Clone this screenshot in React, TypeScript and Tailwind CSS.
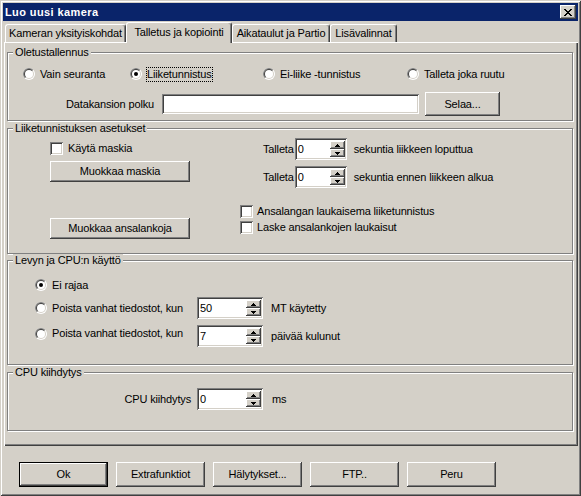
import React from "react";

const RAISED =
  "shadow-[inset_-1px_-1px_#404040,inset_1px_1px_#ffffff,inset_-2px_-2px_#808080,inset_2px_2px_#d4d0c8]";
const SUNKEN =
  "shadow-[inset_1px_1px_#808080,inset_-1px_-1px_#ffffff,inset_2px_2px_#404040,inset_-2px_-2px_#d4d0c8]";

function Radio({ checked }: { checked?: boolean }) {
  return (
    <svg width="12" height="12" viewBox="0 0 12 12" className="shrink-0">
      <circle cx="6" cy="6" r="6" fill="#ffffff" />
      <path d="M1.757 10.243 A6 6 0 0 1 10.243 1.757 Z" fill="#808080" />
      <circle cx="6" cy="6" r="5" fill="#d4d0c8" />
      <path d="M2.464 9.536 A5 5 0 0 1 9.536 2.464 Z" fill="#404040" />
      <circle cx="6" cy="6" r="4" fill="#ffffff" />
      {checked && <circle cx="6" cy="6" r="2" fill="#000000" />}
    </svg>
  );
}

function RadioItem({
  label,
  checked,
  focus,
  className = "",
}: {
  label: string;
  checked?: boolean;
  focus?: boolean;
  className?: string;
}) {
  return (
    <div className={"flex items-center " + className}>
      <Radio checked={checked} />
      {focus ? (
        <span className="ml-[4px] border border-dotted border-black leading-[13px] whitespace-nowrap">
          {label}
        </span>
      ) : (
        <span className="ml-[5px] leading-[13px] whitespace-nowrap">{label}</span>
      )}
    </div>
  );
}

function Check() {
  return <span className={"block shrink-0 w-[13px] h-[13px] bg-white " + SUNKEN} />;
}

function SpinBtn({ up }: { up?: boolean }) {
  return (
    <div className={"w-[15px] h-[8px] bg-[#d4d0c8] flex items-center justify-center " + RAISED}>
      <svg width="5" height="3" viewBox="0 0 5 3" shapeRendering="crispEdges">
        {up ? (
          <path d="M2 0h1v1h1v1h1v1H0V2h1V1h1z" fill="#000" />
        ) : (
          <path d="M0 0h5v1H4v1H3v1H2V2H1V1H0z" fill="#000" />
        )}
      </svg>
    </div>
  );
}

function Spin({ value, className = "" }: { value: string; className?: string }) {
  return (
    <div
      className={
        "h-[22px] bg-white flex items-center justify-between pl-[3px] pr-[2px] shrink-0 " +
        SUNKEN +
        " " +
        className
      }
    >
      <span className="leading-[13px]">{value}</span>
      <div className="flex flex-col">
        <SpinBtn up />
        <SpinBtn />
      </div>
    </div>
  );
}

function Btn({
  children,
  className = "",
  def,
}: {
  children: React.ReactNode;
  className?: string;
  def?: boolean;
}) {
  return (
    <button
      type="button"
      className={
        "flex items-center justify-center bg-[#d4d0c8] text-black leading-[13px] shrink-0 " +
        (def ? "border border-black " : "") +
        RAISED +
        " " +
        className
      }
    >
      {children}
    </button>
  );
}

function Group({
  title,
  className = "",
  children,
}: {
  title: string;
  className?: string;
  children: React.ReactNode;
}) {
  return (
    <div
      className={
        "border border-[#808080] shadow-[inset_1px_1px_#ffffff,1px_1px_#ffffff] flex flex-col shrink-0 " +
        className
      }
    >
      <span className="-mt-[7px] ml-[5px] self-start px-[2px] bg-[#d4d0c8] leading-[13px]">
        {title}
      </span>
      {children}
    </div>
  );
}

function Tab({
  label,
  selected,
  className = "",
}: {
  label: string;
  selected?: boolean;
  className?: string;
}) {
  return (
    <div
      className={
        "flex items-center justify-center bg-[#d4d0c8] border-t border-l border-white border-r border-r-[#404040] rounded-t-[3px] shadow-[inset_-1px_0_#808080] whitespace-nowrap " +
        (selected ? "h-[21px] -mb-[1px] relative z-10 pb-[1px] " : "h-[18px] ") +
        className
      }
    >
      {label}
    </div>
  );
}

export default function App() {
  return (
    <div className="w-[581px] h-[496px] bg-[#d4d0c8] p-[3px] flex flex-col font-['Liberation_Sans',Arial,sans-serif] text-[11px] leading-[13px] tracking-[-0.15px] text-black shadow-[inset_1px_1px_#d4d0c8,inset_-1px_-1px_#404040,inset_2px_2px_#ffffff,inset_-2px_-2px_#808080] overflow-hidden select-none">
      {/* Title bar */}
      <div className="h-[18px] shrink-0 bg-[#0a246a] flex items-center justify-between pl-[2px] pr-[2px]">
        <span className="text-white font-bold text-[11px] tracking-[0.4px] leading-[14px]">
          Luo uusi kamera
        </span>
        <div className={"w-[16px] h-[14px] bg-[#d4d0c8] flex items-center justify-center " + RAISED}>
          <svg width="8" height="7" viewBox="0 0 8 7" shapeRendering="crispEdges">
            <path
              d="M0 0h2v1h1v1h2V1h1V0h2v1H7v1H6v1H5v1h1v1h1v1h1v1H6V6H5V5H3v1H2v1H0V6h1V5h1V4h1V3H2V2H1V1H0z"
              fill="#000"
            />
          </svg>
        </div>
      </div>

      {/* Tabs */}
      <div className="h-[21px] shrink-0 flex items-end pl-[2px]">
        <Tab label="Kameran yksityiskohdat" className="w-[121px]" />
        <Tab label="Talletus ja kopiointi" selected className="w-[106px]" />
        <Tab label="Aikataulut ja Partio" className="w-[98px]" />
        <Tab label="Lisävalinnat" className="w-[67px]" />
      </div>

      {/* Tab page */}
      <div className="ml-[1px] w-[574px] h-[404px] shrink-0 flex flex-col pt-[10px] pl-[3px] shadow-[inset_1px_1px_#ffffff,inset_-1px_-1px_#404040,inset_-2px_-2px_#808080]">
        <Group title="Oletustallennus" className="w-[566px] h-[69px]">
          <div className="flex items-center h-[16px] mt-[7px] pl-[15px]">
            <RadioItem label="Vain seuranta" className="w-[107px]" />
            <RadioItem label="Liiketunnistus" checked focus className="w-[133px]" />
            <RadioItem label="Ei-liike -tunnistus" className="w-[144px]" />
            <RadioItem label="Talleta joka ruutu" />
          </div>
          <div className="flex items-center h-[24px] mt-[10px] pl-[48px]">
            <span className="w-[98px] text-right whitespace-nowrap">Datakansion polku</span>
            <div className={"ml-[8px] w-[257px] h-[20px] bg-white shrink-0 " + SUNKEN} />
            <Btn className="ml-[6px] w-[75px] h-[24px]">Selaa...</Btn>
          </div>
        </Group>

        <Group title="Liiketunnistuksen asetukset" className="mt-[7px] w-[566px] h-[126px]">
          <div className="flex">
            <div className="flex flex-col w-[232px] pl-[42px] shrink-0">
              <div className="flex items-center h-[13px] mt-[7px]">
                <Check />
                <span className="ml-[5px]">Käytä maskia</span>
              </div>
              <Btn className="mt-[6px] w-[140px] h-[21px]">Muokkaa maskia</Btn>
              <Btn className="mt-[36px] w-[140px] h-[21px]">Muokkaa ansalankoja</Btn>
            </div>
            <div className="flex flex-col">
              <div className="flex items-center h-[22px] mt-[3px] pl-[23px]">
                <span>Talleta</span>
                <Spin value="0" className="ml-[1px] w-[52px]" />
                <span className="ml-[7px] whitespace-nowrap">sekuntia liikkeen loputtua</span>
              </div>
              <div className="flex items-center h-[22px] mt-[6px] pl-[23px]">
                <span>Talleta</span>
                <Spin value="0" className="ml-[1px] w-[52px]" />
                <span className="ml-[7px] whitespace-nowrap">sekuntia ennen liikkeen alkua</span>
              </div>
              <div className="flex items-center h-[16px] mt-[15px]">
                <Check />
                <span className="ml-[4px] whitespace-nowrap">Ansalangan laukaisema liiketunnistus</span>
              </div>
              <div className="flex items-center h-[16px]">
                <Check />
                <span className="ml-[4px] whitespace-nowrap">Laske ansalankojen laukaisut</span>
              </div>
            </div>
          </div>
        </Group>

        <Group title="Levyn ja CPU:n käyttö" className="mt-[6px] w-[566px] h-[105px]">
          <div className="flex items-center h-[16px] mt-[10px] pl-[27px]">
            <Radio checked />
            <span className="ml-[5px]">Ei rajaa</span>
          </div>
          <div className="flex items-center h-[22px] mt-[4px] pl-[27px]">
            <div className="flex items-center w-[162px] shrink-0">
              <Radio />
              <span className="ml-[5px] whitespace-nowrap">Poista vanhat tiedostot, kun</span>
            </div>
            <Spin value="50" className="w-[66px]" />
            <span className="ml-[8px] whitespace-nowrap">MT käytetty</span>
          </div>
          <div className="flex items-start h-[22px] mt-[6px] pl-[27px]">
            <div className="flex items-center w-[162px] h-[13px] mt-[2px] shrink-0">
              <Radio />
              <span className="ml-[5px] whitespace-nowrap">Poista vanhat tiedostot, kun</span>
            </div>
            <Spin value="7" className="w-[66px]" />
            <span className="ml-[8px] self-center whitespace-nowrap">päivää kulunut</span>
          </div>
        </Group>

        <Group title="CPU kiihdytys" className="mt-[7px] w-[566px] h-[59px]">
          <div className="flex items-center h-[22px] mt-[9px]">
            <span className="w-[183px] text-right whitespace-nowrap">CPU kiihdytys</span>
            <Spin value="0" className="ml-[6px] w-[66px]" />
            <span className="ml-[9px]">ms</span>
          </div>
        </Group>
      </div>

      {/* Bottom buttons */}
      <div className="flex gap-[8px] pl-[16px] mt-[16px] shrink-0">
        <Btn def className="w-[89px] h-[25px]">Ok</Btn>
        <Btn className="w-[89px] h-[25px]">Extrafunktiot</Btn>
        <Btn className="w-[89px] h-[25px]">Hälytykset...</Btn>
        <Btn className="w-[89px] h-[25px]">FTP..</Btn>
        <Btn className="w-[89px] h-[25px]">Peru</Btn>
      </div>
    </div>
  );
}
